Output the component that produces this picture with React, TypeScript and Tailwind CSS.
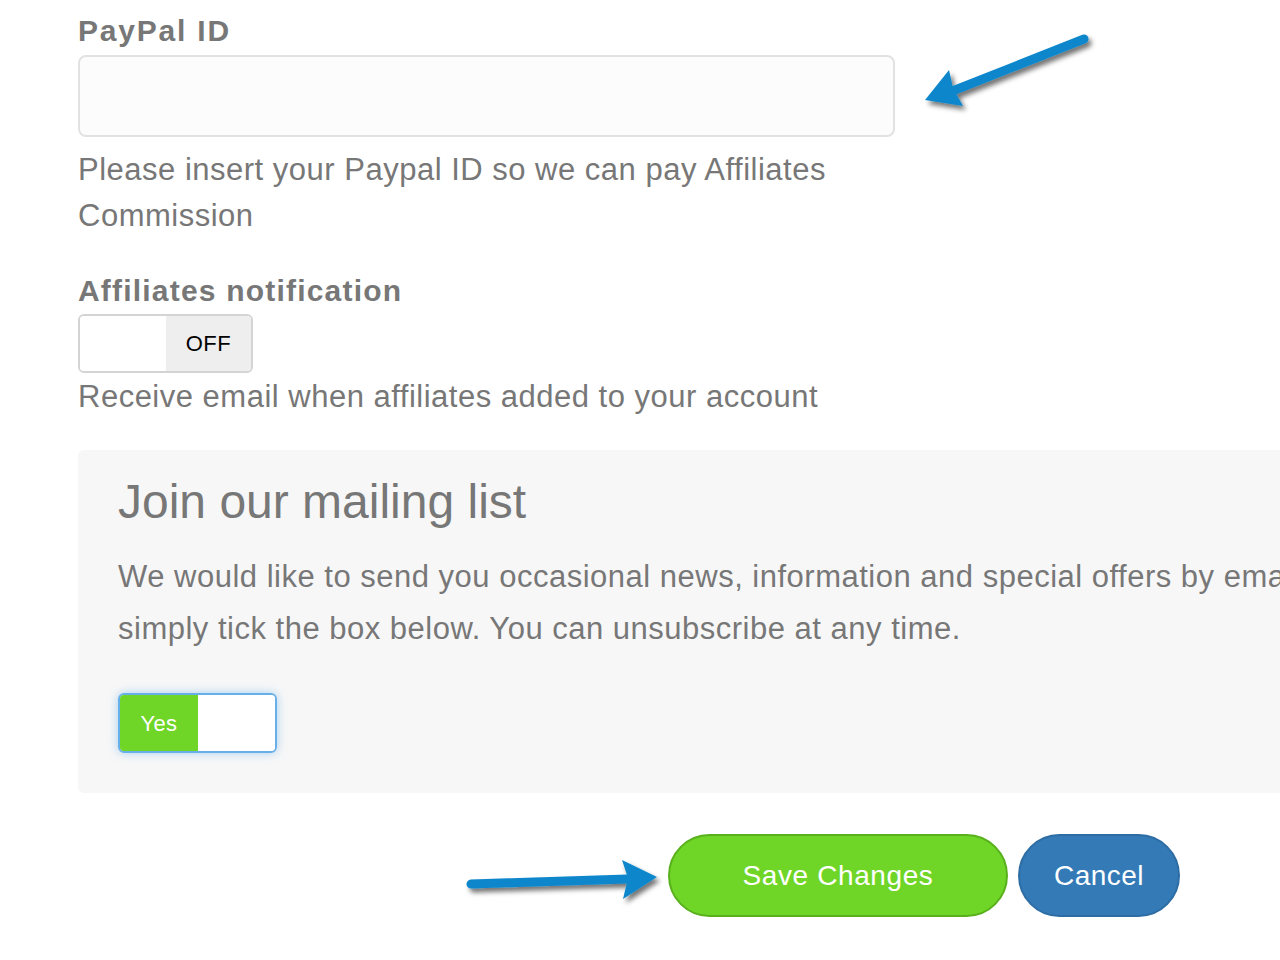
import React from 'react'

const font = { fontFamily: '"Liberation Sans", Arial, sans-serif' }

function Arrow({ d, head }: { d: string; head: string }) {
  return (
    <g filter="url(#arrowShadow)">
      <path d={d} stroke="#0a86cc" strokeWidth={9} strokeLinecap="round" fill="none" />
      <polygon points={head} fill="#0a86cc" />
    </g>
  )
}

export default function App() {
  return (
    <div
      className="relative w-[1280px] h-[960px] overflow-hidden bg-white text-[#777]"
      style={font}
    >
      <div className="pl-[78px] pt-[13px]">
        {/* PayPal */}
        <label className="block text-[30px] leading-[36px] font-bold tracking-[1.8px]">PayPal ID</label>
        <input
          className="mt-[6px] block w-[817px] h-[82px] rounded-[8px] border-2 border-[#e2e2e2] bg-[#fcfcfc] outline-none"
          type="text"
        />
        <p className="mt-[10px] w-[817px] text-[31px] leading-[46px] tracking-[0.5px]">
          Please insert your Paypal ID so we can pay Affiliates Commission
        </p>

        {/* Affiliates notification */}
        <label className="mt-[34px] block text-[30px] leading-[36px] font-bold tracking-[1.2px]">
          Affiliates notification
        </label>
        <div className="mt-[5px] flex w-[175px] h-[59px] rounded-[6px] border-2 border-[#d4d4d4] overflow-hidden">
          <div className="w-[86px] bg-white" />
          <div className="flex-1 flex items-center justify-center bg-[#eeeeee] text-black text-[22px] tracking-[0.5px]">
            OFF
          </div>
        </div>
        <p className="mt-[1px] text-[31px] leading-[46px] tracking-[0.5px]">
          Receive email when affiliates added to your account
        </p>

        {/* Mailing list */}
        <div className="mt-[30px] w-[1300px] h-[343px] rounded-[6px] bg-[#f7f7f7] pl-[40px] pt-[20px]">
          <h2 className="text-[48px] leading-[64px] font-normal">Join our mailing list</h2>
          <p className="mt-[17px] text-[31px] leading-[52px] tracking-[0.5px] whitespace-nowrap">
            We would like to send you occasional news, information and special offers by email. To join,
            <br />
            simply tick the box below. You can unsubscribe at any time.
          </p>
          <div className="mt-[38px] flex w-[159px] h-[60px] rounded-[6px] border-2 border-[#66afe9] overflow-hidden shadow-[0_0_10px_rgba(102,175,233,0.55)]">
            <div className="w-[78px] flex items-center justify-center bg-[#6fd627] text-white text-[22px] tracking-[0.3px]">
              Yes
            </div>
            <div className="flex-1 bg-white" />
          </div>
        </div>

        {/* Buttons */}
        <div className="mt-[41px] w-[1102px] flex justify-end gap-[10px]">
          <button className="w-[340px] h-[83px] rounded-full border-2 border-[#58b01c] bg-[#6fd627] text-white text-[28px] tracking-[0.6px]">
            Save Changes
          </button>
          <button className="w-[162px] h-[83px] rounded-full border-2 border-[#2e6da4] bg-[#337ab7] text-white text-[28px] tracking-[0.5px]">
            Cancel
          </button>
        </div>
      </div>

      {/* annotation arrows */}
      <svg className="absolute inset-0 pointer-events-none" width={1280} height={960}>
        <defs>
          <filter id="arrowShadow" x="-20%" y="-50%" width="140%" height="200%">
            <feDropShadow dx={3} dy={4} stdDeviation={2.5} floodColor="#000" floodOpacity={0.55} />
          </filter>
        </defs>
        <Arrow d="M1084 39 L950 92" head="925,100 949,70 953,88 963,106" />
        <Arrow d="M471 884 L628 879" head="657,877 622,860 628,878 623,899" />
      </svg>
    </div>
  )
}
